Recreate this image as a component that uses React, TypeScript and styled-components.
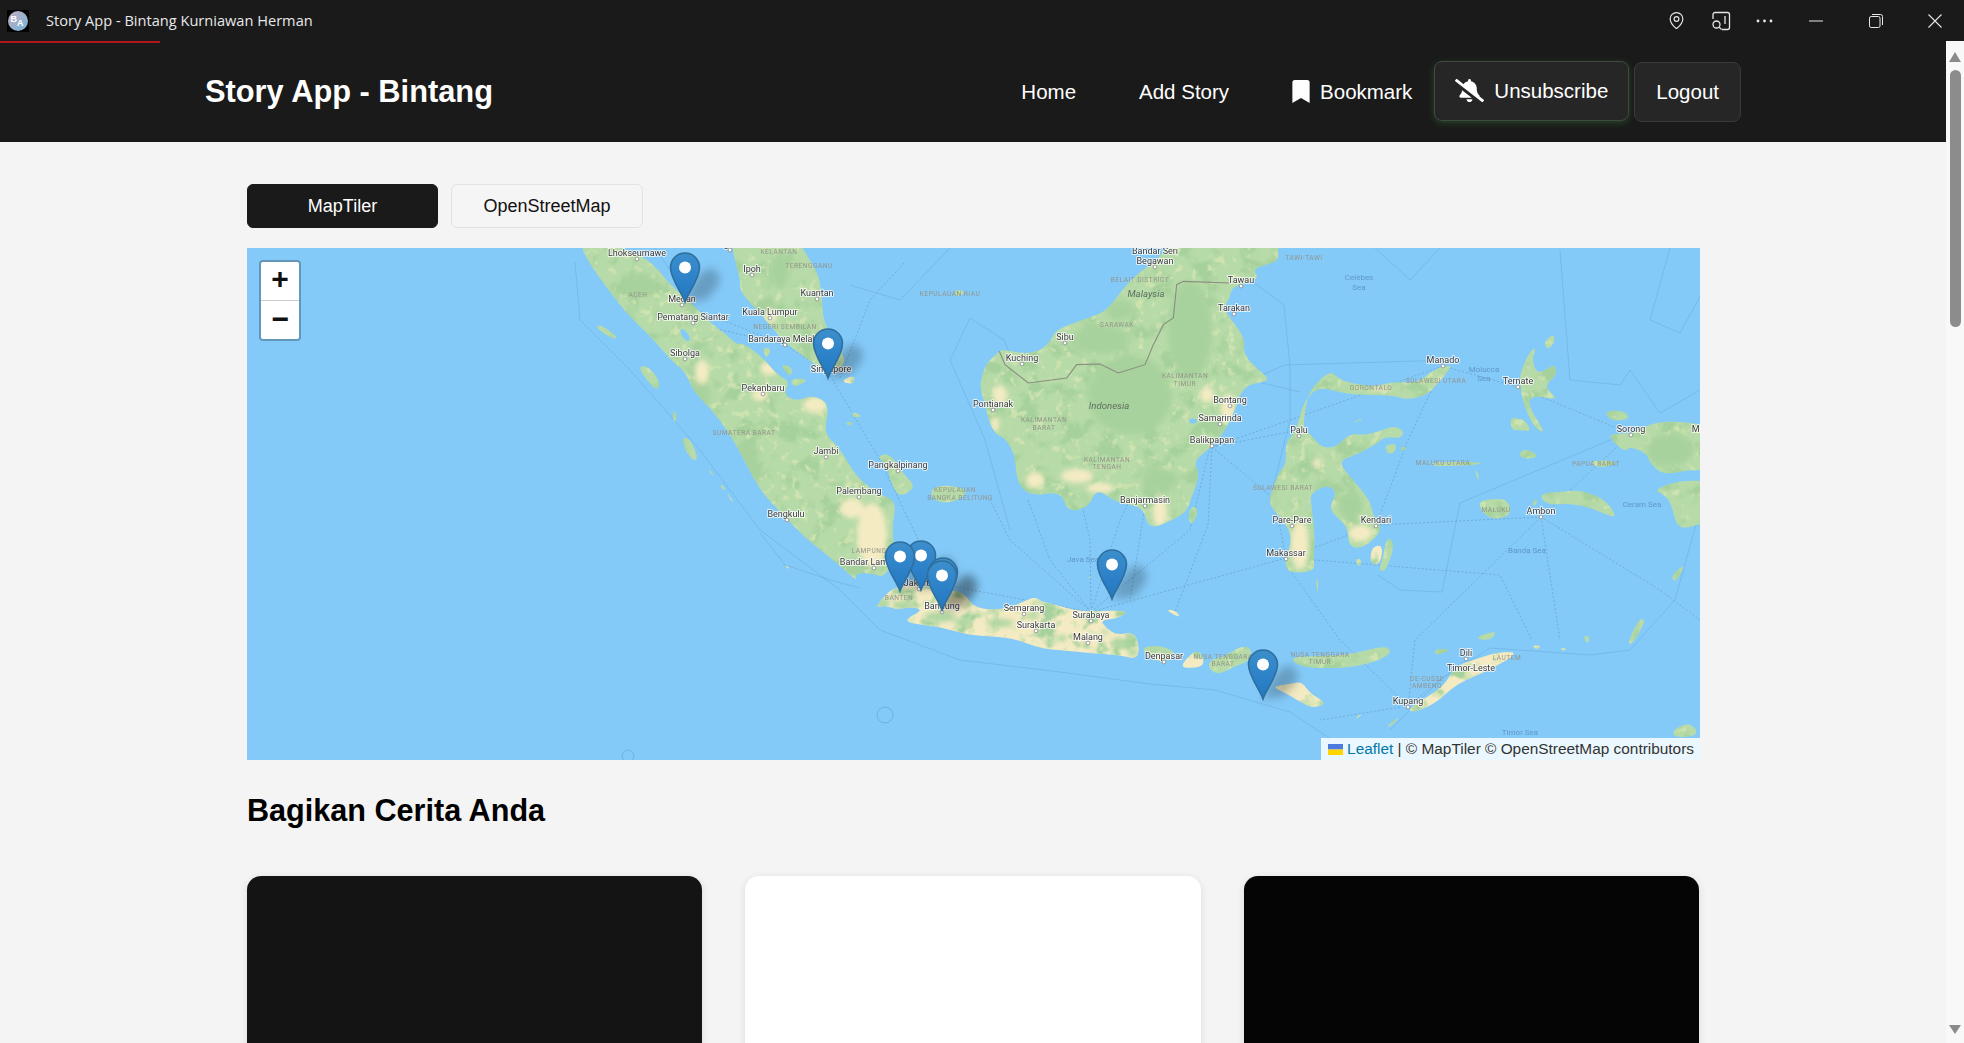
import React from 'react';
import styled, { createGlobalStyle } from 'styled-components';
import { MapPin } from 'lucide-react';
import { FaBellSlash, FaBookmark } from 'react-icons/fa';

type Pt = [number, number];
type Tone = 'green' | 'sand';

const GlobalStyle = createGlobalStyle`
  html, body {
    margin: 0;
    padding: 0;
    height: 100%;
    overflow: hidden;
    background: #f4f4f4;
    font-family: 'Liberation Sans', Arial, sans-serif;
  }
  * { box-sizing: border-box; }
`;

const Shell = styled.div`
  height: 100vh;
  display: flex;
  flex-direction: column;
  overflow: hidden;
`;

const TitleBar = styled.div`
  position: relative;
  flex: 0 0 41px;
  display: flex;
  align-items: center;
  background: #1a1a1a;
  color: #e8e8e8;
`;

const LoadLine = styled.div`
  position: absolute;
  left: 0;
  top: 41px;
  width: 160px;
  height: 2px;
  background: #b3151d;
  z-index: 2;
`;

const AppIcon = styled.svg`
  width: 22px;
  height: 22px;
  margin: 0 17px 0 7px;
  flex: none;
`;

const AppName = styled.span`
  flex: 1;
  margin-top: -2px;
  font-family: 'Open Sans', 'Noto Sans', sans-serif;
  font-size: 14.6px;
`;

const BarButton = styled.div<{ $w: number }>`
  width: ${(p) => p.$w}px;
  height: 41px;
  display: flex;
  align-items: center;
  justify-content: center;
  color: #e6e6e6;
`;

const Body = styled.div`
  flex: 1;
  min-height: 0;
  display: flex;
`;

const Page = styled.div`
  flex: 1;
  min-width: 0;
  overflow: hidden;
`;

const Scrollbar = styled.div`
  flex: 0 0 18px;
  display: flex;
  flex-direction: column;
  align-items: center;
  padding: 11px 0 9px;
  background: #f8f8f8;
`;

const ScrollArrow = styled.div<{ $down?: boolean }>`
  width: 0;
  height: 0;
  border-left: 6px solid transparent;
  border-right: 6px solid transparent;
  ${(p) => (p.$down ? 'border-top: 9px solid #8a8a8a; margin-top: auto;' : 'border-bottom: 10px solid #8a8a8a;')}
`;

const ScrollThumb = styled.div`
  width: 11px;
  height: 257px;
  margin-top: 8px;
  border-radius: 6px;
  background: #8c8c8c;
`;

const Header = styled.header`
  height: 101px;
  background: #1a1a1a;
  color: #fff;
`;

const HeaderInner = styled.div`
  width: 1536px;
  height: 100%;
  margin: 0 auto;
  display: flex;
  align-items: center;
  justify-content: space-between;
`;

const Brand = styled.h1`
  margin: 0;
  font-size: 30.8px;
  font-weight: 700;
`;

const Nav = styled.nav`
  display: flex;
  align-items: center;
`;

const NavLink = styled.a<{ $gap: number }>`
  display: flex;
  align-items: center;
  gap: 10px;
  margin-right: ${(p) => p.$gap}px;
  font-size: 20.5px;
  color: #fff;
`;

const BookmarkIcon = styled(FaBookmark)`
  width: 18px;
  height: 23px;
`;

const NavButton = styled.button<{ $glow?: boolean }>`
  height: 60px;
  display: flex;
  align-items: center;
  gap: 10px;
  padding: 0 ${(p) => (p.$glow ? 20 : 21)}px;
  font: inherit;
  font-size: 20.5px;
  color: #fff;
  background: #262626;
  border: 1px solid ${(p) => (p.$glow ? '#3f4a40' : '#3b3b3b')};
  border-radius: 8px;
  ${(p) => (p.$glow ? 'box-shadow: 0 2px 7px rgba(76, 175, 80, 0.28); margin: -2px 5px 0 0;' : '')}
`;

const Main = styled.main`
  width: 1536px;
  margin: 0 auto;
  padding: 42px 41px 0 42px;
`;

const Tabs = styled.div`
  display: flex;
  gap: 13px;
  margin-bottom: 20px;
`;

const Tab = styled.button<{ $active?: boolean }>`
  width: ${(p) => (p.$active ? 191 : 192)}px;
  height: 44px;
  font: inherit;
  font-size: 18px;
  border-radius: 6px;
  color: ${(p) => (p.$active ? '#fff' : '#111')};
  background: ${(p) => (p.$active ? '#1a1a1a' : '#f5f5f5')};
  border: 1px solid ${(p) => (p.$active ? '#1a1a1a' : '#e2e2e2')};
`;

const MapBox = styled.section`
  position: relative;
  height: 512px;
  overflow: hidden;
  background: #84caf9;
`;

const MapArt = styled.svg`
  display: block;
  width: 100%;
  height: 100%;
  filter: blur(0.45px);
`;

const ZoomControl = styled.div`
  position: absolute;
  left: 12px;
  top: 12px;
  width: 42px;
  border: 2px solid rgba(0, 0, 0, 0.25);
  border-radius: 4px;
  background-clip: padding-box;
  overflow: hidden;
`;

const ZoomButton = styled.div<{ $top?: boolean }>`
  height: ${(p) => (p.$top ? 39 : 38)}px;
  display: flex;
  align-items: center;
  justify-content: center;
  background: #fff;
  color: #111;
  font-family: 'Liberation Mono', monospace;
  font-size: 30px;
  font-weight: 700;
  ${(p) => (p.$top ? 'border-bottom: 1px solid #ccc;' : 'padding-top: 2px;')}
`;

const Attribution = styled.div`
  position: absolute;
  right: 0;
  bottom: 0;
  height: 22px;
  display: flex;
  align-items: center;
  gap: 4px;
  padding: 0 6px 0 7px;
  background: rgba(255, 255, 255, 0.84);
  color: #333;
  font-size: 15.4px;
  white-space: nowrap;
`;

const Flag = styled.svg`
  width: 15px;
  height: 11px;
`;

const AttrLink = styled.a`
  color: #0078a8;
`;

const Heading = styled.h2`
  margin: 33px 0 0;
  height: 83px;
  font-size: 30.6px;
  font-weight: 700;
  line-height: 34px;
  color: #000;
`;

const CardGrid = styled.div`
  display: grid;
  grid-template-columns: repeat(3, 1fr);
  gap: 43px;
  margin-right: 1px;
`;

const Card = styled.article<{ $bg: string }>`
  height: 420px;
  border-radius: 14px;
  background: ${(p) => p.$bg};
  box-shadow: 0 2px 8px rgba(0, 0, 0, 0.1);
`;

// outlines were traced at 3x from a crop, so each list carries its crop origin
const at = (ox: number, oy: number, pts: Pt[]): Pt[] => pts.map(([x, y]) => [ox + x / 3, oy + y / 3]);
const west = (pts: Pt[]) => at(570, 248, pts);
const borneo = (pts: Pt[]) => at(960, 248, pts);
const east = (pts: Pt[]) => at(1260, 330, pts);
const south = (pts: Pt[]) => at(860, 560, pts);

const smooth = (pts: Pt[]) => {
  const mid = (a: Pt, b: Pt): Pt => [(a[0] + b[0]) / 2, (a[1] + b[1]) / 2];
  const start = mid(pts[pts.length - 1], pts[0]);
  let d = `M${start[0]} ${start[1]}`;
  pts.forEach((p, i) => {
    const m = mid(p, pts[(i + 1) % pts.length]);
    d += `Q${p[0]} ${p[1]} ${m[0]} ${m[1]}`;
  });
  return d + 'Z';
};

const land: { tone: Tone; pts: Pt[] }[] = [
  // Sumatra and Malay peninsula
  { tone: 'green', pts: west([[30, -10], [50, 30], [75, 70], [115, 125], [165, 190], [215, 240], [260, 285], [300, 335], [345, 370], [370, 430], [430, 490], [490, 575], [530, 650], [575, 735], [640, 800], [700, 865], [770, 920], [830, 970], [860, 1000], [855, 975], [905, 975], [945, 990], [975, 920], [965, 840], [980, 760], [930, 740], [860, 690], [810, 600], [760, 555], [780, 470], [730, 440], [680, 460], [640, 440], [660, 400], [620, 380], [580, 330], [520, 285], [500, 290], [470, 260], [420, 225], [370, 170], [300, 110], [270, 70], [220, 25], [130, -10]]) },
  { tone: 'green', pts: west([[485, -30], [490, 20], [510, 90], [510, 130], [550, 175], [590, 220], [650, 290], [730, 345], [770, 375], [830, 350], [810, 300], [760, 230], [755, 130], [745, 80], [710, 20], [680, -30]]) },
  { tone: 'green', pts: west([[575, 300], [605, 300], [590, 335]]) },
  { tone: 'green', pts: west([[660, 390], [720, 395], [670, 420]]) },
  { tone: 'green', pts: west([[630, 345], [670, 360], [660, 390]]) },
  { tone: 'sand', pts: west([[810, 400], [855, 380], [850, 410]]) },
  { tone: 'green', pts: west([[845, 490], [880, 505], [850, 510]]) },
  { tone: 'green', pts: west([[825, 525], [850, 520], [840, 535]]) },
  { tone: 'green', pts: west([[920, 625], [960, 615], [1000, 680], [1040, 715], [990, 750], [965, 710], [950, 650]]) },
  { tone: 'green', pts: west([[1080, 720], [1140, 710], [1200, 730], [1150, 765], [1090, 760]]) },
  { tone: 'green', pts: west([[205, 355], [235, 355], [270, 400], [262, 430], [225, 390]]) },
  { tone: 'green', pts: west([[78, 232], [100, 235], [140, 265], [135, 275], [90, 250]]) },
  { tone: 'green', pts: west([[335, 570], [360, 570], [385, 630], [370, 640], [345, 605]]) },
  { tone: 'green', pts: west([[308, 485], [322, 500], [312, 530]]) },
  { tone: 'green', pts: west([[415, 660], [435, 685], [420, 675]]) },
  { tone: 'green', pts: west([[450, 705], [470, 725], [455, 725]]) },
  { tone: 'green', pts: west([[470, 730], [492, 765], [480, 755]]) },
  { tone: 'green', pts: west([[645, 950], [660, 960], [650, 962]]) },
  { tone: 'green', pts: west([[1150, 125], [1190, 130], [1160, 150]]) },
  // Borneo
  { tone: 'green', pts: borneo([[118, 310], [80, 345], [65, 385], [60, 420], [75, 470], [90, 530], [110, 560], [135, 570], [165, 620], [170, 700], [210, 745], [305, 730], [320, 790], [385, 780], [410, 720], [470, 765], [550, 775], [565, 845], [640, 815], [680, 790], [690, 760], [720, 680], [700, 640], [750, 600], [790, 555], [820, 500], [850, 410], [935, 400], [895, 365], [850, 320], [855, 270], [810, 210], [790, 180], [810, 150], [815, 115], [900, 95], [875, 60], [960, 40], [950, 0], [980, -30], [640, -30], [590, 40], [540, 70], [490, 120], [440, 190], [370, 215], [285, 245], [270, 285], [220, 320], [125, 305]]) },
  { tone: 'green', pts: borneo([[685, 790], [705, 770], [715, 800], [690, 835]]) },
  // Sulawesi
  { tone: 'green', pts: east([[575, 110], [530, 165], [500, 195], [440, 210], [400, 195], [285, 195], [235, 185], [175, 170], [130, 215], [110, 300], [75, 340], [80, 400], [55, 430], [25, 510], [40, 540], [85, 590], [95, 640], [75, 680], [80, 730], [165, 725], [160, 680], [165, 620], [155, 530], [150, 490], [200, 465], [225, 480], [225, 500], [205, 540], [265, 590], [265, 650], [310, 655], [370, 600], [340, 560], [330, 510], [270, 440], [235, 395], [285, 375], [345, 345], [375, 320], [425, 325], [430, 300], [400, 288], [370, 300], [320, 315], [270, 310], [225, 355], [180, 350], [150, 310], [130, 300], [135, 235], [150, 180], [210, 120], [240, 150], [280, 160], [340, 170], [400, 155], [470, 160], [520, 120], [565, 105]]) },
  { tone: 'green', pts: east([[380, 620], [405, 640], [380, 720], [355, 725], [370, 680]]) },
  { tone: 'sand', pts: east([[335, 650], [370, 645], [360, 705], [330, 700]]) },
  { tone: 'green', pts: east([[290, 685], [305, 690], [300, 712], [288, 700]]) },
  { tone: 'green', pts: east([[375, 345], [410, 340], [405, 370], [380, 370]]) },
  { tone: 'green', pts: east([[420, 350], [440, 350], [430, 365]]) },
  { tone: 'green', pts: east([[275, 280], [310, 262], [300, 272]]) },
  { tone: 'green', pts: east([[168, 745], [176, 750], [172, 798]]) },
  // Maluku
  { tone: 'green', pts: east([[510, 395], [680, 397], [640, 405], [520, 410]]) },
  { tone: 'green', pts: east([[645, 410], [660, 450], [650, 445]]) },
  { tone: 'green', pts: east([[775, 370], [800, 355], [840, 380], [790, 388]]) },
  { tone: 'green', pts: east([[750, 265], [770, 265], [795, 270], [815, 305], [780, 300], [755, 300]]) },
  { tone: 'green', pts: east([[780, 135], [800, 80], [830, 45], [815, 95], [835, 135], [885, 100], [890, 135], [850, 170], [900, 212], [820, 195], [800, 220], [860, 315], [820, 290], [790, 220], [780, 165]]) },
  { tone: 'green', pts: east([[850, 40], [880, 10], [885, 35], [865, 60]]) },
  { tone: 'green', pts: east([[1030, 245], [1085, 240], [1115, 265], [1060, 275]]) },
  { tone: 'green', pts: east([[1045, 315], [1085, 310], [1120, 310], [1200, 268], [1380, 290], [1380, 420], [1280, 420], [1210, 435], [1170, 400], [1160, 370], [1110, 350], [1095, 365], [1065, 340]]) },
  { tone: 'green', pts: east([[985, 395], [1040, 390], [1075, 400], [1020, 415]]) },
  { tone: 'green', pts: east([[1180, 480], [1260, 450], [1380, 455], [1380, 560], [1285, 595], [1250, 590], [1235, 525], [1215, 495]]) },
  { tone: 'green', pts: east([[835, 490], [920, 485], [960, 480], [1040, 510], [1075, 570], [1000, 535], [930, 520], [860, 525]]) },
  { tone: 'green', pts: east([[820, 510], [835, 510], [820, 535]]) },
  { tone: 'green', pts: east([[655, 515], [700, 505], [745, 510], [755, 555], [700, 570], [665, 545]]) },
  { tone: 'green', pts: east([[1235, 735], [1278, 700], [1255, 745], [1240, 755]]) },
  // Java and Nusa Tenggara
  { tone: 'sand', pts: south([[45, 145], [75, 105], [100, 85], [130, 80], [170, 70], [200, 80], [250, 90], [300, 95], [320, 110], [345, 145], [430, 150], [490, 125], [525, 110], [545, 125], [590, 135], [640, 150], [690, 155], [810, 150], [775, 175], [720, 180], [740, 205], [770, 225], [830, 215], [840, 300], [780, 285], [700, 280], [600, 270], [540, 265], [460, 235], [400, 230], [320, 225], [240, 200], [145, 190], [140, 175], [190, 150], [150, 140], [110, 150], [75, 135]]) },
  { tone: 'green', pts: south([[845, 262], [900, 255], [955, 280], [905, 310], [860, 285]]) },
  { tone: 'sand', pts: south([[985, 290], [1010, 270], [1030, 290], [1030, 320], [975, 325], [965, 315]]) },
  { tone: 'green', pts: south([[1050, 300], [1090, 290], [1140, 260], [1170, 262], [1175, 285], [1165, 305], [1120, 320], [1075, 345], [1045, 325]]) },
  { tone: 'sand', pts: south([[1235, 380], [1300, 370], [1325, 365], [1350, 400], [1400, 430], [1360, 445], [1320, 425], [1270, 395]]) },
  { tone: 'sand', pts: south([[915, 150], [945, 150], [965, 175]]) },
  { tone: 'green', pts: south([[684, 50], [696, 50], [690, 56]]) },
  { tone: 'green', pts: [[1287, 656], [1346, 656], [1385, 645], [1392, 652], [1380, 660], [1351, 668], [1302, 668]] },
  // Timor and the small islands east of it
  { tone: 'sand', pts: [[1520, 652], [1498, 652], [1473, 660], [1454, 667], [1444, 687], [1410, 707], [1410, 713], [1434, 705], [1456, 684], [1490, 670]] },
  { tone: 'green', pts: [[1473, 638], [1498, 630], [1490, 641]] },
  { tone: 'green', pts: [[1434, 649], [1452, 649], [1436, 656]] },
  { tone: 'sand', pts: [[1385, 728], [1400, 716], [1394, 724]] },
  { tone: 'sand', pts: [[1355, 719], [1361, 713], [1360, 717]] },
  { tone: 'sand', pts: [[1532, 645], [1542, 646], [1536, 650]] },
  { tone: 'sand', pts: [[1561, 647], [1567, 649], [1562, 651]] },
  { tone: 'green', pts: [[1583, 636], [1590, 636], [1588, 645]] },
  { tone: 'green', pts: [[1627, 645], [1639, 618], [1646, 620], [1634, 642]] },
  { tone: 'green', pts: [[1672, 730], [1690, 722], [1700, 735], [1675, 738]] },
];

type Patch = [number, number, number, number];

const sandPatches: Patch[] = [
  [872, 535, 15, 32], [852, 508, 12, 10], [770, 368, 10, 7], [815, 405, 12, 8], [760, 395, 8, 6], [702, 372, 7, 12],
  [771, 316, 6, 7], [1077, 476, 16, 7], [1160, 512, 7, 16], [1207, 395, 7, 8], [1228, 408, 7, 14], [1000, 395, 7, 10],
  [995, 424, 4, 8], [1035, 480, 9, 8], [1100, 488, 14, 5], [1300, 545, 9, 24], [1360, 533, 12, 8], [1380, 389, 12, 2.5],
  [1317, 463, 5, 4], [1442, 380, 5, 4],
];

const greenPatches: Patch[] = [
  [883, 603, 7, 5], [903, 606, 9, 5], [940, 617, 16, 5], [962, 622, 8, 4], [1000, 623, 14, 4], [1033, 616, 7, 3],
  [1062, 638, 5, 3], [1120, 643, 9, 5], [1133, 652, 5, 4], [1105, 632, 4, 2],
];

const darkPatches: Patch[] = [
  [640, 285, 16, 12], [700, 395, 10, 22], [745, 470, 14, 30], [1130, 395, 42, 40], [1190, 330, 22, 50],
  [1100, 340, 30, 14], [1160, 480, 18, 12], [1120, 310, 14, 10], [1325, 490, 10, 12], [1350, 505, 12, 14],
  [780, 270, 10, 18], [1670, 450, 24, 16],
];

const Blobs: React.FC<{ items: Patch[]; fill: string }> = ({ items, fill }) => (
  <>
    {items.map(([x, y, rx, ry]) => (
      <ellipse key={`${x}-${y}`} cx={x} cy={y} rx={rx} ry={ry} fill={fill} />
    ))}
  </>
);

const borderLine = borneo([[118, 310], [135, 350], [205, 405], [320, 390], [350, 350], [420, 348], [475, 375], [555, 350], [580, 290], [610, 230], [640, 210], [650, 110], [670, 100], [810, 105]]);

// EEZ lines along the coast
const seaBorders = [
  'M655 248 L690 300 L720 340 L760 400',
  'M575 262 L580 320 L630 370 L700 450 L760 530 L840 590 L880 630 L960 660 L1060 672 L1150 684 L1215 690 L1290 712 L1340 745 L1420 760',
  'M760 533 L785 565 L830 580 L860 588',
  'M850 285 L900 300 L950 248',
  'M1670 248 L1650 320 L1680 333 L1720 260',
  'M1560 250 L1570 380 L1620 385 L1630 370 L1660 413 L1700 390',
  'M1375 248 L1410 280 L1440 248',
  'M1300 392 L1250 380 L1285 365 L1450 360',
  'M1165 520 L1190 470',
  'M1700 510 L1675 600 L1630 650 L1590 655 L1490 648 L1440 680 L1390 730',
  'M1210 250 L1284 305 L1290 365 L1290 420 L1270 500',
  'M1010 355 L1004 340 L970 318 L950 360 L985 440 L1010 530',
  'M1627 433 L1460 503 L1442 592 L1400 590 L1378 575',
];

// ferry routes, dashed
const routes = [
  'M1091 612 L1010 540 L990 500',
  'M1091 612 L1050 560 L1028 500',
  'M1091 612 L1090 540 L1082 505',
  'M1091 612 L1120 520 L1130 500',
  'M1091 612 L1190 530 L1210 447',
  'M1091 612 L1286 558',
  'M1091 612 L1015 598 L945 585',
  'M1212 447 L1275 500 L1286 558',
  'M1212 447 L1298 430',
  'M1212 447 L1208 525 L1175 612',
  'M1443 366 L1290 420 L1212 447',
  'M1443 366 L1518 387 L1631 434',
  'M1443 366 L1408 440 L1376 525',
  'M1541 517 L1631 434',
  'M1541 517 L1376 525 L1286 558',
  'M1541 517 L1660 590 L1700 620',
  'M1541 517 L1415 640 L1408 706',
  'M1290 558 L1500 575 L1532 640',
  'M1541 517 L1560 640',
  'M1290 570 L1340 640 L1408 706',
  'M1408 706 L1320 720',
  'M1408 706 L1466 659',
  'M693 323 L785 345 L828 372',
  'M828 372 L880 460 L940 585',
  'M682 304 L785 345',
  'M840 378 L870 300 L905 262',
  'M1145 506 L1130 600',
];

type Label = { x: number; y: number; t: string; dot?: Pt };

const cities: Label[] = [
  { x: 731, y: 247, t: 'George Town', dot: [730, 250] },
  { x: 637, y: 256, t: 'Lhokseumawe', dot: [637, 259] },
  { x: 752, y: 272, t: 'Ipoh', dot: [752, 275] },
  { x: 817, y: 296, t: 'Kuantan', dot: [817, 299] },
  { x: 770, y: 315, t: 'Kuala Lumpur', dot: [770, 318] },
  { x: 785, y: 342, t: 'Bandaraya Melaka', dot: [785, 345] },
  { x: 682, y: 302, t: 'Medan', dot: [682, 305] },
  { x: 693, y: 320, t: 'Pematang Siantar', dot: [693, 323] },
  { x: 685, y: 356, t: 'Sibolga', dot: [685, 359] },
  { x: 831, y: 372, t: 'Singapore' },
  { x: 763, y: 391, t: 'Pekanbaru', dot: [763, 394] },
  { x: 826, y: 454, t: 'Jambi', dot: [826, 457] },
  { x: 898, y: 468, t: 'Pangkalpinang', dot: [898, 471] },
  { x: 859, y: 494, t: 'Palembang', dot: [859, 497] },
  { x: 786, y: 517, t: 'Bengkulu', dot: [787, 520] },
  { x: 874, y: 565, t: 'Bandar Lampung', dot: [874, 568] },
  { x: 919, y: 586, t: 'Jakarta', dot: [919, 589] },
  { x: 942, y: 609, t: 'Bandung', dot: [942, 612] },
  { x: 1024, y: 611, t: 'Semarang', dot: [1024, 614] },
  { x: 1036, y: 628, t: 'Surakarta', dot: [1036, 631] },
  { x: 1091, y: 618, t: 'Surabaya', dot: [1091, 621] },
  { x: 1088, y: 640, t: 'Malang', dot: [1088, 643] },
  { x: 1164, y: 659, t: 'Denpasar', dot: [1164, 662] },
  { x: 1155, y: 254, t: 'Bandar Seri' },
  { x: 1155, y: 264, t: 'Begawan', dot: [1155, 267] },
  { x: 1241, y: 283, t: 'Tawau', dot: [1241, 286] },
  { x: 1234, y: 311, t: 'Tarakan', dot: [1234, 314] },
  { x: 1065, y: 340, t: 'Sibu', dot: [1065, 343] },
  { x: 1022, y: 361, t: 'Kuching', dot: [1022, 364] },
  { x: 993, y: 407, t: 'Pontianak', dot: [993, 410] },
  { x: 1230, y: 403, t: 'Bontang', dot: [1230, 406] },
  { x: 1220, y: 421, t: 'Samarinda', dot: [1220, 424] },
  { x: 1212, y: 443, t: 'Balikpapan', dot: [1212, 446] },
  { x: 1145, y: 503, t: 'Banjarmasin', dot: [1145, 506] },
  { x: 1443, y: 363, t: 'Manado', dot: [1443, 366] },
  { x: 1518, y: 384, t: 'Ternate', dot: [1518, 387] },
  { x: 1631, y: 432, t: 'Sorong', dot: [1631, 435] },
  { x: 1714, y: 432, t: 'Manokwari' },
  { x: 1299, y: 433, t: 'Palu', dot: [1299, 436] },
  { x: 1541, y: 514, t: 'Ambon', dot: [1541, 517] },
  { x: 1292, y: 523, t: 'Pare-Pare', dot: [1292, 526] },
  { x: 1376, y: 523, t: 'Kendari', dot: [1376, 526] },
  { x: 1286, y: 556, t: 'Makassar', dot: [1286, 559] },
  { x: 1466, y: 656, t: 'Dili', dot: [1466, 659] },
  { x: 1471, y: 671, t: 'Timor-Leste' },
  { x: 1408, y: 704, t: 'Kupang', dot: [1408, 707] },
];

const regions: Label[] = [
  { x: 779, y: 254, t: 'KELANTAN' },
  { x: 809, y: 268, t: 'TERENGGANU' },
  { x: 785, y: 329, t: 'NEGERI SEMBILAN' },
  { x: 638, y: 297, t: 'ACEH' },
  { x: 744, y: 435, t: 'SUMATERA BARAT' },
  { x: 869, y: 553, t: 'LAMPUNG' },
  { x: 899, y: 600, t: 'BANTEN' },
  { x: 950, y: 296, t: 'KEPULAUAN RIAU' },
  { x: 1304, y: 260, t: 'TAWI-TAWI' },
  { x: 1140, y: 282, t: 'BELAIT DISTRICT' },
  { x: 1117, y: 327, t: 'SARAWAK' },
  { x: 1185, y: 378, t: 'KALIMANTAN' },
  { x: 1185, y: 386, t: 'TIMUR' },
  { x: 1044, y: 422, t: 'KALIMANTAN' },
  { x: 1044, y: 430, t: 'BARAT' },
  { x: 1107, y: 462, t: 'KALIMANTAN' },
  { x: 1107, y: 469, t: 'TENGAH' },
  { x: 955, y: 492, t: 'KEPULAUAN' },
  { x: 960, y: 500, t: 'BANGKA BELITUNG' },
  { x: 1436, y: 383, t: 'SULAWESI UTARA' },
  { x: 1371, y: 390, t: 'GORONTALO' },
  { x: 1443, y: 465, t: 'MALUKU UTARA' },
  { x: 1596, y: 466, t: 'PAPUA BARAT' },
  { x: 1283, y: 490, t: 'SULAWESI BARAT' },
  { x: 1496, y: 512, t: 'MALUKU' },
  { x: 1223, y: 659, t: 'NUSA TENGGARA' },
  { x: 1223, y: 666, t: 'BARAT' },
  { x: 1320, y: 657, t: 'NUSA TENGGARA' },
  { x: 1320, y: 664, t: 'TIMUR' },
  { x: 1507, y: 660, t: 'LAUTEM' },
  { x: 1427, y: 681, t: 'OE-CUSSE' },
  { x: 1427, y: 688, t: 'AMBENO' },
];

const seas: Label[] = [
  { x: 1359, y: 280, t: 'Celebes' },
  { x: 1359, y: 290, t: 'Sea' },
  { x: 1484, y: 372, t: 'Molucca' },
  { x: 1484, y: 381, t: 'Sea' },
  { x: 1642, y: 507, t: 'Ceram Sea' },
  { x: 1527, y: 553, t: 'Banda Sea' },
  { x: 1083, y: 562, t: 'Java Sea' },
  { x: 1520, y: 735, t: 'Timor Sea' },
];

const MapLabel = styled.text<{ $kind: 'city' | 'region' | 'sea' | 'country' }>`
  font-family: Roboto, 'Liberation Sans', sans-serif;
  text-anchor: middle;
  paint-order: stroke;
  stroke-linejoin: round;
  font-size: ${(p) => (p.$kind === 'city' ? 9 : p.$kind === 'country' ? 9.6 : p.$kind === 'sea' ? 8 : 6.6)}px;
  font-style: ${(p) => (p.$kind === 'country' ? 'italic' : 'normal')};
  letter-spacing: ${(p) => (p.$kind === 'region' ? 0.5 : 0)}px;
  fill: ${(p) => (p.$kind === 'city' ? '#3a3a3a' : p.$kind === 'region' ? '#94948a' : p.$kind === 'sea' ? '#5f97c4' : '#5f6f60')};
  stroke: ${(p) => (p.$kind === 'city' ? 'rgba(255,255,255,0.75)' : 'none')};
  stroke-width: ${(p) => (p.$kind === 'city' ? 2 : 0)}px;
`;

// tip positions of the story markers, back to front
const pins: Pt[] = [
  [685, 302], [828, 378], [921, 590], [900, 591], [943, 607], [942, 610], [1112, 599], [1263, 699],
];

const MarkerShadow: React.FC<{ at: Pt }> = ({ at: [x, y] }) => (
  <path
    d={`M${x} ${y} L${x + 20} ${y - 2} Q${x + 46} ${y - 24} ${x + 26} ${y - 34} Q${x + 10} ${y - 30} ${x} ${y}Z`}
    fill="rgba(0,0,0,0.22)"
    filter="url(#shadowBlur)"
  />
);

const Marker: React.FC<{ at: Pt }> = ({ at: [x, y] }) => (
  <g transform={`translate(${x - 15.5} ${y - 50})`}>
    <path
      d="M15.5 50C12.5 41 1 27 1 15.5A14.5 14.5 0 1 1 30 15.5C30 27 18.5 41 15.5 50Z"
      fill="url(#pinFill)"
      stroke="#2f6f9e"
      strokeWidth="1.6"
    />
    <circle cx="15.5" cy="15.5" r="6" fill="#fff" />
  </g>
);

const IndonesiaMap: React.FC = () => (
  <MapArt viewBox="247 248 1453 512" preserveAspectRatio="none">
    <defs>
      <clipPath id="landClip">
        {land.map((l, i) => (
          <path key={i} d={smooth(l.pts)} />
        ))}
      </clipPath>
      <filter id="terrainBlur" x="-20%" y="-20%" width="140%" height="140%">
        <feGaussianBlur stdDeviation="2.5" />
      </filter>
      <filter id="speckleLight" x="0" y="0" width="100%" height="100%" colorInterpolationFilters="sRGB">
        <feTurbulence type="fractalNoise" baseFrequency="0.11" numOctaves="3" seed="4" />
        <feColorMatrix values="0 0 0 0 0.84  0 0 0 0 0.9  0 0 0 0 0.7  6 0 0 0 -3.5" />
      </filter>
      <filter id="speckleDark" x="0" y="0" width="100%" height="100%" colorInterpolationFilters="sRGB">
        <feTurbulence type="fractalNoise" baseFrequency="0.05" numOctaves="3" seed="11" />
        <feColorMatrix values="0 0 0 0 0.65  0 0 0 0 0.82  0 0 0 0 0.61  5 0 0 0 -2.5" />
      </filter>
      <filter id="shadowBlur" x="-50%" y="-50%" width="200%" height="200%">
        <feGaussianBlur stdDeviation="4" />
      </filter>
      <linearGradient id="pinFill" x1="0" y1="0" x2="0" y2="1">
        <stop offset="0" stopColor="#3d8fcb" />
        <stop offset="0.6" stopColor="#2b80c8" />
        <stop offset="1" stopColor="#2478bd" />
      </linearGradient>
    </defs>
    <rect x="247" y="248" width="1453" height="512" fill="#84caf9" />
    <g fill="none" stroke="#5ea3d2" strokeOpacity="0.4" strokeWidth="1">
      {seaBorders.map((d) => (
        <path key={d} d={d} />
      ))}
    </g>
    <g fill="none" stroke="#4e7f9f" strokeOpacity="0.45" strokeWidth="0.9" strokeDasharray="2 2">
      {routes.map((d) => (
        <path key={d} d={d} />
      ))}
    </g>
    <circle cx="885" cy="715" r="8" fill="none" stroke="#5ea3d2" strokeOpacity="0.6" />
    <circle cx="628" cy="756" r="6" fill="none" stroke="#5ea3d2" strokeOpacity="0.6" />
    {land.map((l, i) => (
      <path key={i} d={smooth(l.pts)} fill={l.tone === 'sand' ? '#f4ebc3' : '#b7dba8'} />
    ))}
    <g clipPath="url(#landClip)">
      <rect x="560" y="248" width="1140" height="512" filter="url(#speckleDark)" />
      <rect x="560" y="248" width="1140" height="512" filter="url(#speckleLight)" opacity="0.75" />
      <g filter="url(#terrainBlur)">
        <Blobs items={darkPatches} fill="#a8d29d" />
        <Blobs items={sandPatches} fill="#f4ebc3" />
        <Blobs items={greenPatches} fill="#aed6a0" />
      </g>
    </g>
    <ellipse cx="685" cy="335" rx="3" ry="7" transform="rotate(-35 685 335)" fill="#84caf9" />
    <ellipse cx="1193" cy="421" rx="4" ry="2.5" fill="#84caf9" />
    <path
      d={`M${borderLine.map((p) => p.join(' ')).join('L')}`}
      fill="none"
      stroke="#8b8d80"
      strokeWidth="1.1"
    />
    {regions.map((l) => (
      <MapLabel key={`${l.t}-${l.x}-${l.y}`} $kind="region" x={l.x} y={l.y}>
        {l.t}
      </MapLabel>
    ))}
    {seas.map((l) => (
      <MapLabel key={`${l.t}-${l.x}-${l.y}`} $kind="sea" x={l.x} y={l.y}>
        {l.t}
      </MapLabel>
    ))}
    <MapLabel $kind="country" x={1146} y={297}>
      Malaysia
    </MapLabel>
    <MapLabel $kind="country" x={1109} y={409}>
      Indonesia
    </MapLabel>
    {cities.map((l) => (
      <g key={l.t}>
        <MapLabel $kind="city" x={l.x} y={l.y}>
          {l.t}
        </MapLabel>
        {l.dot && <circle cx={l.dot[0]} cy={l.dot[1]} r="1.9" fill="#fff" stroke="#777" strokeWidth="0.7" />}
      </g>
    ))}
    {pins.map((p) => (
      <MarkerShadow key={p.join()} at={p} />
    ))}
    {pins.map((p) => (
      <Marker key={p.join()} at={p} />
    ))}
  </MapArt>
);

const App: React.FC = () => (
  <Shell>
    <GlobalStyle />
    <TitleBar>
      <AppIcon viewBox="0 0 22 22">
        <defs>
          <linearGradient id="favFill" x1="0" y1="0" x2="1" y2="1">
            <stop offset="0" stopColor="#c9a9bd" />
            <stop offset="1" stopColor="#6fb7dc" />
          </linearGradient>
        </defs>
        <rect width="22" height="22" fill="#000" />
        <circle cx="11" cy="11" r="10" fill="url(#favFill)" />
        <text x="3.5" y="12" fontFamily="Liberation Sans" fontSize="9" fontWeight="700" fill="#fff">
          B
        </text>
        <text x="10" y="16" fontFamily="Liberation Sans" fontSize="9" fontWeight="700" fill="#fff">
          A
        </text>
      </AppIcon>
      <AppName>Story App - Bintang Kurniawan Herman</AppName>
      <BarButton $w={46}>
        <MapPin size={19} strokeWidth={1.5} />
      </BarButton>
      <BarButton $w={44}>
        <svg width="20" height="20" viewBox="0 0 20 20" fill="none" stroke="currentColor" strokeWidth="1.3">
          <path d="M2 8V3.5A2 2 0 0 1 4 1.5H16.5A2 2 0 0 1 18.5 3.5V16.5A2 2 0 0 1 16.5 18.5H11" />
          <path d="M14 5V13" />
          <circle cx="5.5" cy="13.5" r="3.5" />
          <path d="M8 16L10.5 18.5" />
        </svg>
      </BarButton>
      <BarButton $w={43}>
        <svg width="17" height="4" viewBox="0 0 17 4" fill="currentColor">
          <circle cx="2" cy="2" r="1.4" />
          <circle cx="8.5" cy="2" r="1.4" />
          <circle cx="15" cy="2" r="1.4" />
        </svg>
      </BarButton>
      <BarButton $w={60}>
        <svg width="14" height="2" viewBox="0 0 14 2">
          <path d="M0 1H14" stroke="currentColor" strokeWidth="1" />
        </svg>
      </BarButton>
      <BarButton $w={60}>
        <svg width="14" height="14" viewBox="0 0 14 14" fill="none" stroke="currentColor" strokeWidth="1">
          <rect x="0.5" y="2.5" width="10.5" height="11" rx="1.6" />
          <path d="M3 0.5H11.5A2 2 0 0 1 13.5 2.5V11" />
        </svg>
      </BarButton>
      <BarButton $w={58}>
        <svg width="14" height="14" viewBox="0 0 14 14" stroke="currentColor" strokeWidth="1.1">
          <path d="M0.5 0.5L13.5 13.5M13.5 0.5L0.5 13.5" />
        </svg>
      </BarButton>
      <LoadLine />
    </TitleBar>
    <Body>
      <Page>
        <Header>
          <HeaderInner>
            <Brand>Story App - Bintang</Brand>
            <Nav>
              <NavLink $gap={63}>Home</NavLink>
              <NavLink $gap={63}>Add Story</NavLink>
              <NavLink $gap={22}>
                <BookmarkIcon />
                Bookmark
              </NavLink>
              <NavButton $glow>
                <FaBellSlash size={29} />
                Unsubscribe
              </NavButton>
              <NavButton>Logout</NavButton>
            </Nav>
          </HeaderInner>
        </Header>
        <Main>
          <Tabs>
            <Tab $active>MapTiler</Tab>
            <Tab>OpenStreetMap</Tab>
          </Tabs>
          <MapBox>
            <IndonesiaMap />
            <ZoomControl>
              <ZoomButton $top>+</ZoomButton>
              <ZoomButton>−</ZoomButton>
            </ZoomControl>
            <Attribution>
              <Flag viewBox="0 0 15 11">
                <rect width="15" height="5.5" fill="#4c7be0" />
                <rect y="5.5" width="15" height="5.5" fill="#ffd500" />
              </Flag>
              <span>
                <AttrLink>Leaflet</AttrLink> | © MapTiler © OpenStreetMap contributors
              </span>
            </Attribution>
          </MapBox>
          <Heading>Bagikan Cerita Anda</Heading>
          <CardGrid>
            <Card $bg="#141414" />
            <Card $bg="#ffffff" />
            <Card $bg="#050505" />
          </CardGrid>
        </Main>
      </Page>
      <Scrollbar>
        <ScrollArrow />
        <ScrollThumb />
        <ScrollArrow $down />
      </Scrollbar>
    </Body>
  </Shell>
);

export default App;
